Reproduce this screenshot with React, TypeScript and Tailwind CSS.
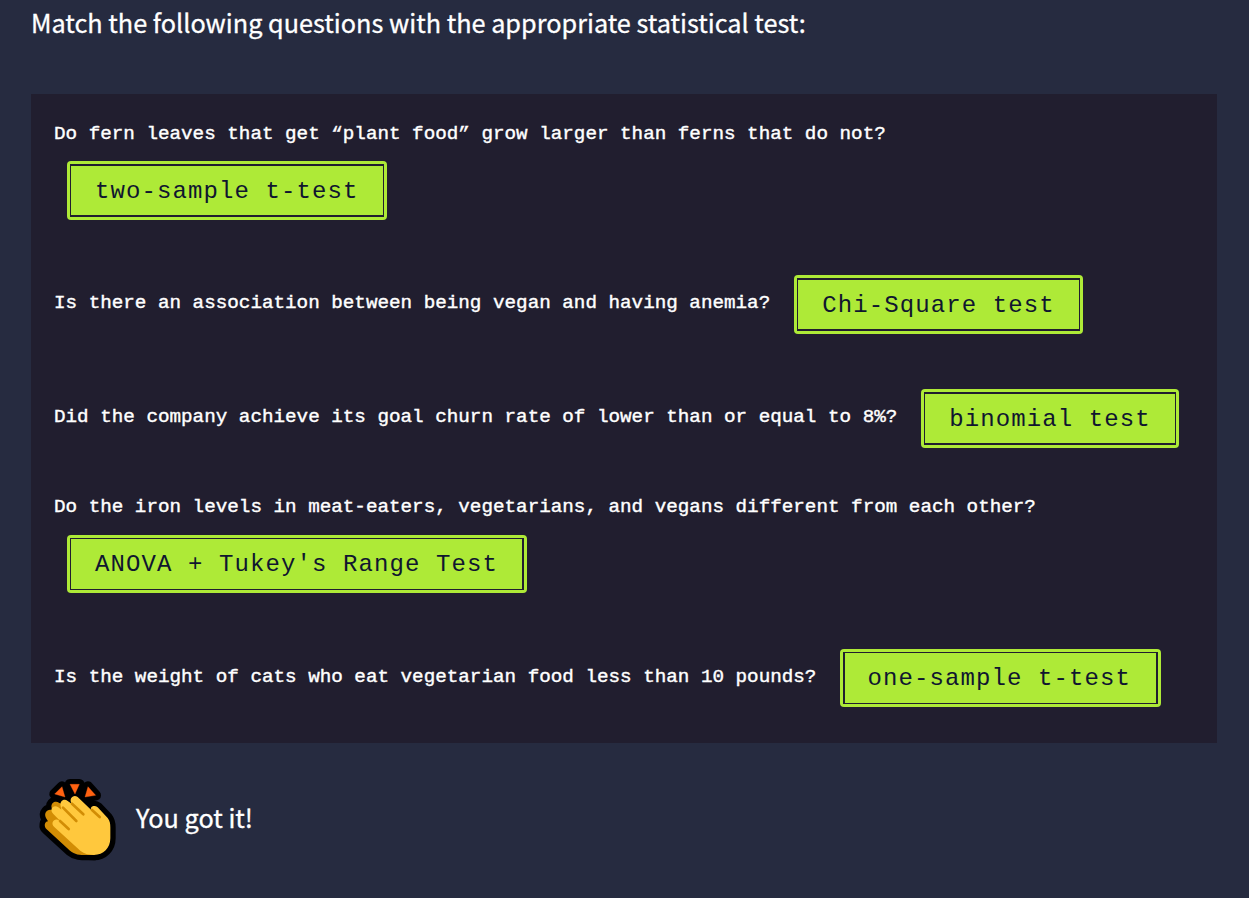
type AnswerProps = { text: string; size: string; inner: string };

function Answer({ text, size, inner }: AnswerProps) {
  return (
    <div className={`shrink-0 rounded-[4px] bg-[#aeea37] p-[3px] ${size}`}>
      <div
        className={`flex h-full items-center border-[#211e2f] pt-[2px] font-['Liberation_Mono',monospace] text-[24px] leading-none tracking-[1.1px] whitespace-pre text-[#10162f] ${inner}`}
      >
        {text}
      </div>
    </div>
  );
}

function Question({ text }: { text: string }) {
  return (
    <p className="h-[30px] shrink-0 font-['Liberation_Mono',monospace] text-[19.25px] leading-[30px] whitespace-nowrap text-white [-webkit-text-stroke:0.4px_white]">
      {text}
    </p>
  );
}

function Clap() {
  const hand =
    "M131 69L171 107C168 98 181 92 191 100L221 132C228 141 229 149 229 160V193C229 222 208 243 180 243C158 243 147 238 134 226L60 158C48 146 62 130 75 139L81 143L58 120C44 105 59 90 73 100L82 107L80 96C76 82 90 72 101 81L113 89C103 73 119 59 131 69Z";
  const back =
    "M76 87C63 78 49 88 53 102L55 109C41 103 28 117 36 132L42 142C31 143 29 158 38 166L108 230C126 245 143 243 180 243L200 200L110 100Z";
  const rays = "M84 38L93 69L62 60ZM108 31H136L123 60ZM162 38L185 64L153 69Z";
  return (
    <svg className="h-[92px] w-[90px] shrink-0" viewBox="0 0 270 276" aria-hidden="true">
      <g fill="#000" stroke="#000" strokeLinejoin="round">
        <path d={hand} strokeWidth="32" />
        <path d={back} strokeWidth="32" />
        <path d={rays} strokeWidth="32" />
        <path d="M75 75L165 60L185 90L90 100Z" />
      </g>
      <path d={back} fill="#d28d05" />
      <path d={hand} fill="#ffc83d" />
      <path
        d="M114 89L148 121M87 101L127 141M78 141L104 165M174 108L197 129"
        fill="none"
        stroke="#d28d05"
        strokeWidth="8"
        strokeLinecap="round"
      />
      <path d={rays} fill="#ff6211" stroke="#ff6211" strokeWidth="1" strokeLinejoin="round" />
    </svg>
  );
}

export default function App() {
  return (
    <main className="h-[898px] overflow-hidden bg-[#262b40] pr-8 pl-[31px]">
      <h1 className="h-[94px] font-['Noto_Sans_CJK_SC',sans-serif] text-[25.25px] leading-[44px] whitespace-nowrap text-white [-webkit-text-stroke:0.3px_white]">
        Match the following questions with the appropriate statistical test:
      </h1>

      <section className="flex h-[649px] flex-col bg-[#211e2f] pt-[25px] pl-[23px]">
        <div className="h-[156px]">
          <Question text="Do fern leaves that get “plant food” grow larger than ferns that do not?" />
          <div className="pt-3 pl-[13px]">
            <Answer text="two-sample t-test" size="w-[320px] h-[59px]" inner="border-x border-y-2 pl-[24px]" />
          </div>
        </div>
        <div className="flex h-[114px] items-start gap-6">
          <div className="pt-[13px]">
            <Question text="Is there an association between being vegan and having anemia?" />
          </div>
          <Answer text="Chi-Square test" size="w-[289px] h-[59px]" inner="border-x border-y-2 pl-[24px]" />
        </div>
        <div className="flex h-[103px] items-start gap-6">
          <div className="pt-[13px]">
            <Question text="Did the company achieve its goal churn rate of lower than or equal to 8%?" />
          </div>
          <Answer text="binomial test" size="w-[258px] h-[59px]" inner="border-x border-y-2 pl-[24px]" />
        </div>
        <div className="h-[157px]">
          <Question text="Do the iron levels in meat-eaters, vegetarians, and vegans different from each other?" />
          <div className="pt-[13px] pl-[13px]">
            <Answer text="ANOVA + Tukey's Range Test" size="w-[460px] h-[58px]" inner="border border-r-2 pl-[24px]" />
          </div>
        </div>
        <div className="flex items-start gap-6">
          <div className="pt-[13px]">
            <Question text="Is the weight of cats who eat vegetarian food less than 10 pounds?" />
          </div>
          <Answer text="one-sample t-test" size="w-[321px] h-[58px]" inner="border-x-2 border-y pl-[22px]" />
        </div>
      </section>

      <div className="flex items-center gap-3 pt-[31px] pl-[3px]">
        <Clap />
        <p className="pb-[5px] font-['Noto_Sans_CJK_SC',sans-serif] text-[25.25px] leading-none text-white [-webkit-text-stroke:0.3px_white]">
          You got it!
        </p>
      </div>
    </main>
  );
}
